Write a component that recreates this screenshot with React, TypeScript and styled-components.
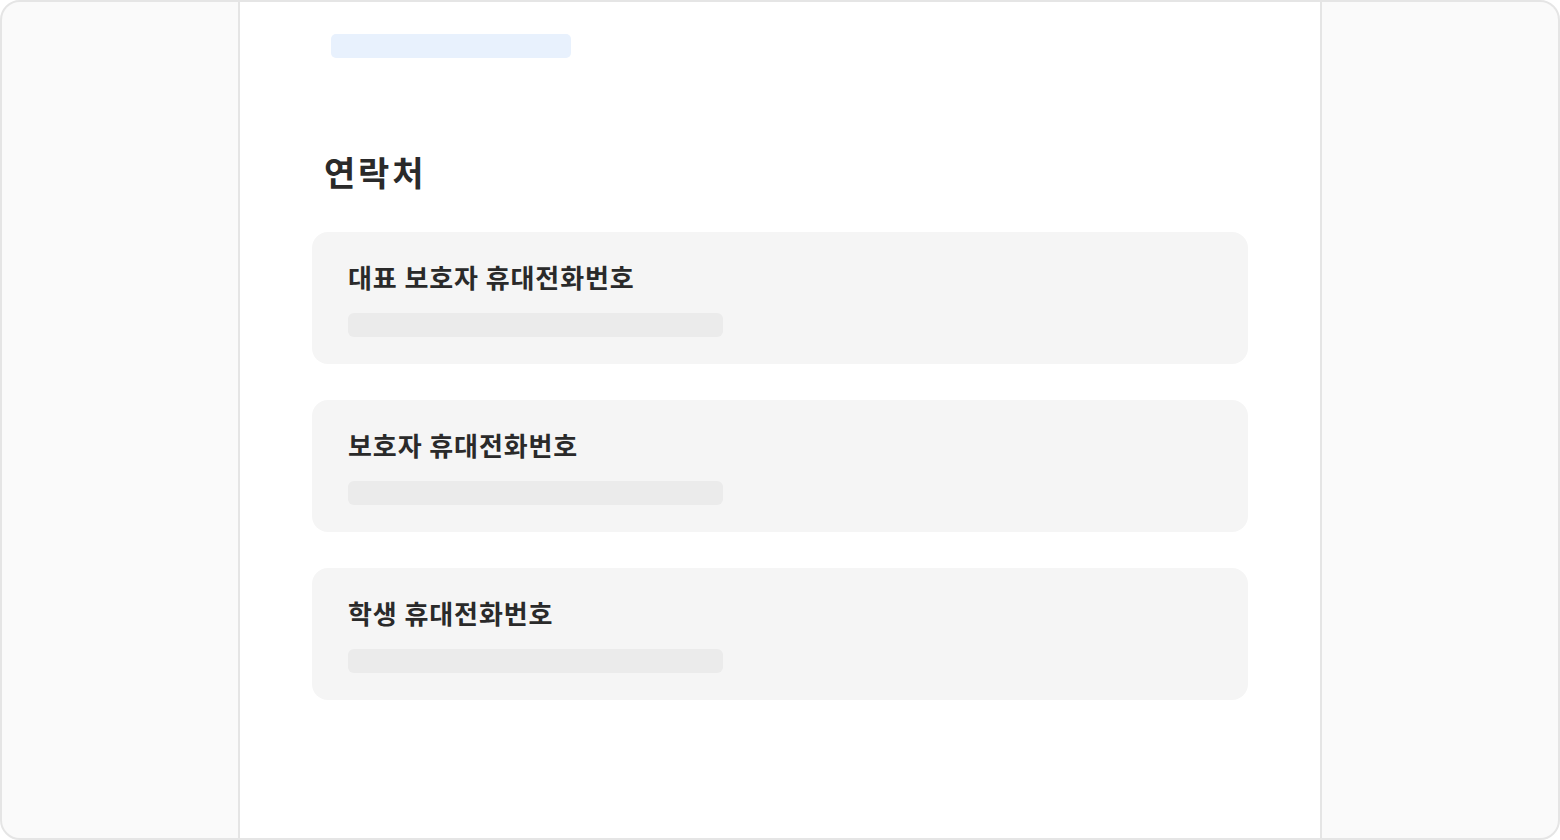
import styled, { createGlobalStyle } from 'styled-components';

const GlobalStyle = createGlobalStyle`
  html, body {
    margin: 0;
    padding: 0;
    background: #ffffff;
  }
  body {
    font-family: 'Noto Sans CJK KR', 'Noto Sans', sans-serif;
  }
`;

const Frame = styled.div`
  box-sizing: border-box;
  width: 1560px;
  height: 840px;
  border: 2px solid #e5e5e5;
  border-radius: 20px;
  overflow: hidden;
  display: grid;
  grid-template-columns: 236px 1080px 236px;
  column-gap: 2px;
  background-color: #e5e5e5;
`;

const SidePanel = styled.div`
  background-color: #fafafa;
`;

const Main = styled.main`
  background-color: #ffffff;
  display: flex;
  flex-flow: column nowrap;
  padding: 32px 72px 0;
`;

const TopBar = styled.div`
  width: 240px;
  height: 24px;
  margin-left: 19px;
  border-radius: 5px;
  background-color: #e8f1fd;
`;

const SectionTitle = styled.h2`
  margin: 91px 0 37px 12px;
  font-size: 34px;
  line-height: 46px;
  font-weight: 700;
  color: #2a2a2a;
  letter-spacing: 2.8px;
`;

const FieldList = styled.div`
  display: flex;
  flex-flow: column nowrap;
  gap: 36px;
`;

const FieldCard = styled.section`
  box-sizing: border-box;
  height: 132px;
  padding: 28px 36px 0;
  border-radius: 16px;
  background-color: #f5f5f5;
  display: flex;
  flex-flow: column nowrap;
  gap: 19px;
`;

const FieldLabel = styled.h3`
  margin: 0;
  font-size: 26px;
  line-height: 34px;
  font-weight: 700;
  color: #2a2a2a;
  letter-spacing: 0.9px;
`;

const ValuePlaceholder = styled.div`
  width: 375px;
  height: 24px;
  border-radius: 6px;
  background-color: #ebebeb;
`;

const fields = ['대표 보호자 휴대전화번호', '보호자 휴대전화번호', '학생 휴대전화번호'];

const App = (): JSX.Element => (
  <>
    <GlobalStyle />
    <Frame>
      <SidePanel />
      <Main>
        <TopBar />
        <SectionTitle>연락처</SectionTitle>
        <FieldList>
          {fields.map((label) => (
            <FieldCard key={label}>
              <FieldLabel>{label}</FieldLabel>
              <ValuePlaceholder />
            </FieldCard>
          ))}
        </FieldList>
      </Main>
      <SidePanel />
    </Frame>
  </>
);

export default App;
